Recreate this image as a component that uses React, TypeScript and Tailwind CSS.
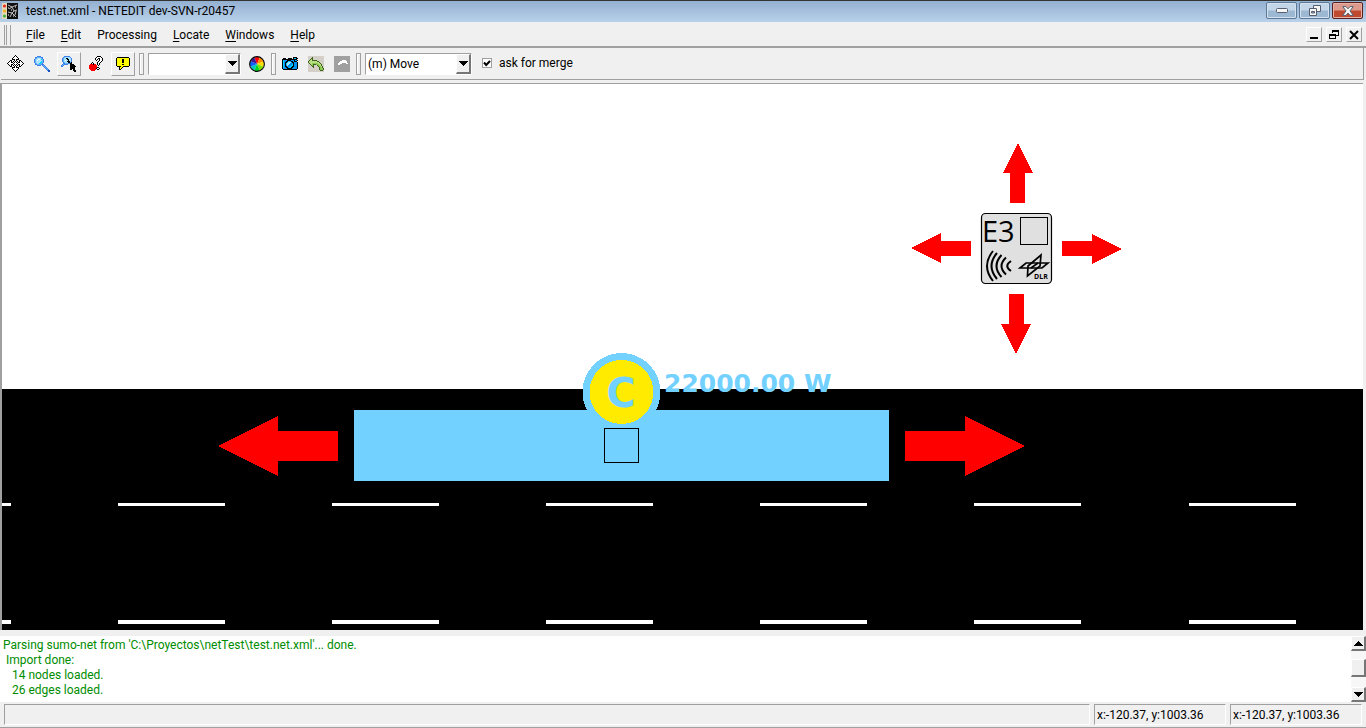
import React, { useState } from "react";

const TOOL_BUTTON = "flex h-6 w-6 shrink-0 items-center justify-center";
const RAISED =
  "border border-t-white border-l-white border-r-[#a0a0a0] border-b-[#a0a0a0]";
const SUNKEN =
  "border border-t-[#a0a0a0] border-l-[#a0a0a0] border-r-white border-b-white";
const RAISED_DEEP =
  "border-t border-l border-r-2 border-b-2 border-t-white border-l-white border-r-[#767676] border-b-[#767676] bg-[#f0f0f0]";

const PALETTE: Record<string, string> = {
  "#": "#000000",
  o: "#ffffff",
  b: "#3f7fe8",
  d: "#1c4fc4",
  l: "#a8e4ff",
  c: "#62b4f4",
  r: "#ff0000",
  y: "#ffff00",
  g: "#8cc850",
  h: "#b8e080",
  k: "#3c6420",
  t: "#d4d0c8",
  m: "#0090f0",
  s: "#00d0ff",
  x: "#a0a0a0",
};

function PixelIcon({ rows }: { rows: string[] }) {
  return (
    <svg
      width={rows[0].length}
      height={rows.length}
      viewBox={`0 0 ${rows[0].length} ${rows.length}`}
      shapeRendering="crispEdges"
      aria-hidden="true"
    >
      {rows.flatMap((row, y) =>
        row.split("").map((p, x) =>
          p === "." ? null : (
            <rect key={`${x}-${y}`} x={x} y={y} width="1" height="1" fill={PALETTE[p]} />
          ),
        ),
      )}
    </svg>
  );
}

const MOVE = [
  "........#........",
  ".......#o#.......",
  "......#ooo#......",
  ".....#ooooo#.....",
  ".....###o###.....",
  "...##..#o#..##...",
  "..#o#.#.#.#.#o#..",
  ".#oo##.#o#.##oo#.",
  "#ooooo#ooo#ooooo#",
  ".#oo##.#o#.##oo#.",
  "..#o#.#.#.#.#o#..",
  "...##..#o#..##...",
  ".....###o###.....",
  ".....#ooooo#.....",
  "......#ooo#......",
  ".......#o#.......",
  "........#........",
];

const MAGNIFIER = [
  "...bbbb.........",
  ".bbccccbb.......",
  ".bcllllcb.......",
  "bclloolscb......",
  "bclollllcb......",
  "bclllllscb......",
  "bcllllsscb......",
  ".bcllsscb.......",
  ".bbccccbbb......",
  "...bbbb.bcb.....",
  ".........bcb....",
  "..........bcb...",
  "...........bcb..",
  "............bcb.",
  ".............bdd",
  "..............dd",
];

const MAGNIFIER_CURSOR = [
  "...bbbbbb.......",
  "..bclllllb......",
  ".bcll##lllb.....",
  ".bclll##llb.....",
  ".bcloll#llb.....",
  ".bclll###lb.....",
  "..bclll##b#.....",
  "..bbcccbb##.....",
  ".bcbbbb..####...",
  "bcb......#####..",
  "bb.......######.",
  ".........#####..",
  ".........#####..",
  ".........##.##..",
  "............###.",
  ".............##.",
];

const HELP = [
  "........####..",
  ".......#oooo#.",
  "......#oo##oo#",
  "......#o#.#oo#",
  ".......#..#oo#",
  ".........#oo#.",
  "...#....#oo#..",
  "..#.#...#o#...",
  ".rrr#rr.#o#...",
  "rrrrrrrr.#....",
  "rrrrrrrr......",
  "rrrrrrrr##....",
  "rrrrrrr#oo#...",
  ".rrrrrr.##....",
  "..rrrr........",
];

const BUBBLE = [
  ".############.",
  "#yyyyyyyyyyyy#",
  "#yyyyy##yyyyy#",
  "#yyyyy##yyyyy#",
  "#yyyyy##yyyyy#",
  "#yyyyy##yyyyy#",
  "#yyyyyyyyyyyy#",
  "#yyyyy##yyyyy#",
  "#yyyyyyyyyyyy#",
  ".####yy######.",
  "...#yy#.......",
  "...#y#........",
  "...##.........",
];

const CAMERA = [
  "...........####.",
  ".###..####.#ss##",
  "###############.",
  "#smmm####mmm#mm#",
  "#smm##ssm##m###.",
  "#sm##slllm##mmm#",
  "#sm#slllmmm#mmm#",
  "#sm#sllmmms#mmm#",
  "#sm#mlmmmss#mmm#",
  "#sm##mmmss##mmm#",
  "#smm##mss##mmmm#",
  "#mmmm#####mmmmm#",
  ".##############.",
];

const UNDO = [
  "tttttttttttttttt",
  "ttttkttttttttttt",
  "tttkkttttttttttt",
  "ttkhkttttttttttt",
  "tkhhkkkkkttttttt",
  "khhhhhhhhkkttttt",
  "khhhhhhhhhhktttt",
  "tkhhgggggghhkttt",
  "ttkhgkkkggghhktt",
  "tttkgktttkgghktt",
  "ttttkkttttkgghkt",
  "tttttktttttkggkt",
  "tttttttttttkgggk",
  "tttttttttttkgggk",
  "ttttttttttttkkkt",
  "tttttttttttttttt",
];

const REDO = [
  "xxxxxxxxxxxxxxxx",
  "xxxxxxxxxxxxxxxx",
  "xxxxxxxxxxxxxxxx",
  "xxxxxxxxxxxxxxxx",
  "xxxxxxxxooooxxxx",
  "xxxxxxoooooooxxx",
  "xxxxxooooooooxxx",
  "xxxxooooxxxxooxx",
  "xxxxooxxxxxxxxxx",
  "xxxxxxxxxxxxxxxx",
  "xxxxxxxxxxxxxxxx",
  "xxxxxxxxxxxxxxxx",
  "xxxxxxxxxxxxxxxx",
  "xxxxxxxxxxxxxxxx",
  "xxxxxxxxxxxxxxxx",
  "xxxxxxxxxxxxxxxx",
];

function ColorWheel() {
  const colors = ["#ff0000", "#ff9000", "#ffe000", "#80e000", "#00d820", "#00c8c0", "#1060ff", "#401890"];
  const point = (i: number) => {
    const a = ((i * 45 - 112) * Math.PI) / 180;
    return `${8 + 7 * Math.cos(a)} ${8 + 7 * Math.sin(a)}`;
  };
  return (
    <svg width="16" height="16" viewBox="0 0 16 16" aria-hidden="true">
      {colors.map((c, i) => (
        <path key={c} d={`M8 8L${point(i)}A7 7 0 0 1 ${point(i + 1)}Z`} fill={c} />
      ))}
      <circle cx="8" cy="8" r="7.4" fill="none" stroke="#000" strokeWidth="1.1" />
    </svg>
  );
}

function AppIcon() {
  return (
    <svg width="16" height="16" viewBox="0 0 16 16" aria-hidden="true">
      <rect width="16" height="16" fill="#111" />
      <rect width="5" height="16" fill="#e6d9b8" />
      <circle cx="2.5" cy="3" r="1.6" fill="#e83020" />
      <circle cx="2.5" cy="8" r="1.6" fill="#f0b020" />
      <circle cx="2.5" cy="13" r="1.6" fill="#40b040" />
      <path
        d="M6 2l4 2 5-2M7 6l3-2 2 4 3-1M6 9l4 1 2-2M10 10l-2 4M10 10l4 4M14 8l-1 4"
        fill="none"
        stroke="#d0d0d0"
        strokeWidth=".9"
      />
      <path d="M6 5h1M9 7h1M13 4h1M6 12h1M11 13h1" stroke="#fff" />
    </svg>
  );
}

function Grip() {
  return (
    <span className="h-[22px] w-[5px] shrink-0 border border-[#a0a0a0] bg-[#f0f0f0] shadow-[inset_1px_1px_0_#fff]" />
  );
}

function Arrow({ up = false }: { up?: boolean }) {
  return (
    <svg width="9" height="5" viewBox="0 0 9 5" shapeRendering="crispEdges" aria-hidden="true">
      <path d={up ? "M0 5L4.5 0L9 5Z" : "M0 0H9L4.5 5Z"} />
    </svg>
  );
}

function Combo({ label, options, className }: { label: string; options: string[]; className: string }) {
  return (
    <span className={`relative h-[22px] shrink-0 bg-white ${SUNKEN} ${className}`}>
      <select aria-label={label} className="block h-full w-full appearance-none bg-transparent pl-[2px] outline-none">
        {options.map((o) => (
          <option key={o}>{o}</option>
        ))}
      </select>
      <span className={`pointer-events-none absolute inset-y-0 right-0 flex w-[15px] items-center justify-center ${RAISED_DEEP}`}>
        <Arrow />
      </span>
    </span>
  );
}

function ToolButton({ label, raised, children }: { label: string; raised?: boolean; children: React.ReactNode }) {
  return (
    <button type="button" aria-label={label} className={`${TOOL_BUTTON} ${raised ? RAISED : ""}`}>
      {children}
    </button>
  );
}

function TitleBar() {
  const glass =
    "flex h-[17px] w-[31px] items-center justify-center rounded-[2px] border border-[#5b7896] bg-linear-to-b from-[#c3d5e8] from-45% to-[#9db8d3] to-55% shadow-[inset_0_0_0_1px_#d4e2f0]";
  return (
    <header className="flex h-[22px] items-center border-t border-[#333] bg-linear-to-b from-[#94b0d1] to-[#b9d1ea] pr-[3px] pb-px pl-[2px]">
      <AppIcon />
      <h1 className="ml-2 flex-1">test.net.xml - NETEDIT dev-SVN-r20457</h1>
      <div className="flex gap-[2px] self-start pt-px">
        <button type="button" aria-label="Minimize" className={glass}>
          <svg width="12" height="5" viewBox="0 0 12 5">
            <rect x=".5" y=".5" width="11" height="4" rx="1" fill="#f5f5f5" stroke="#555f70" />
          </svg>
        </button>
        <button type="button" aria-label="Restore" className={glass}>
          <svg width="12" height="11" viewBox="0 0 12 11" fill="#f5f5f5" stroke="#555f70">
            <path d="M4.5 .5h7v6h-7z" />
            <path d="M.5 3.5h7v7h-7z" />
            <path d="M2.5 6.5h3v1.5h-3z" fill="#9db8d3" />
          </svg>
        </button>
        <button
          type="button"
          aria-label="Close"
          className="flex h-[17px] w-[31px] items-center justify-center rounded-[2px] border border-[#5a2020] bg-linear-to-b from-[#dd9a8c] from-45% to-[#c04a30] to-55% shadow-[inset_0_0_0_1px_#e6b0a4]"
        >
          <svg width="12" height="10" viewBox="0 0 12 10">
            <path
              d="M.8 .6H4L6 2.8 8 .6h3.2L8 4.9l3.3 4.5H8L6 7 4 9.4H.7L4 4.9Z"
              fill="#f5f5f5"
              stroke="#555f70"
            />
          </svg>
        </button>
      </div>
    </header>
  );
}

const MENUS = [
  ["F", "ile"],
  ["E", "dit"],
  ["", "Processing"],
  ["L", "ocate"],
  ["W", "indows"],
  ["H", "elp"],
];

function MenuBar() {
  const mdi = `flex h-[15px] w-4 items-center justify-center ${RAISED}`;
  return (
    <div className="flex h-[26px] items-center border-b-2 border-[#a0a0a0] pt-px pr-[4px] pl-[4px]">
      <span className="h-5 w-[3px] border-x border-[#a0a0a0]" />
      <span className="ml-px h-5 w-[3px] border-r border-[#a0a0a0]" />
      <nav className="ml-[7px] flex flex-1">
        {MENUS.map(([key, rest]) => (
          <button key={rest} type="button" className="px-2">
            <span className="underline underline-offset-2">{key}</span>
            {rest}
          </button>
        ))}
      </nav>
      <div className="flex gap-1">
        <button type="button" aria-label="Minimize document" className={mdi}>
          <svg width="10" height="10" viewBox="0 0 10 10" shapeRendering="crispEdges">
            <path d="M1 7h8v2H1z" />
          </svg>
        </button>
        <button type="button" aria-label="Restore document" className={mdi}>
          <svg width="10" height="10" viewBox="0 0 10 10" shapeRendering="crispEdges" fill="none" stroke="#000">
            <path d="M3.5 3V.5h6v5H7M3 1.5h7M.5 4.5h6v4h-6zM0 5.5h7" />
          </svg>
        </button>
        <button type="button" aria-label="Close document" className={mdi}>
          <svg width="10" height="10" viewBox="0 0 10 10">
            <path d="M1 1l8 8M9 1l-8 8" stroke="#000" strokeWidth="2" />
          </svg>
        </button>
      </div>
    </div>
  );
}

function ToolBar() {
  const [merge, setMerge] = useState(true);
  return (
    <div className="mr-[2px] ml-px flex h-8 items-center border-r border-b border-[#a0a0a0] pl-[2px]">
      <div className="flex gap-[3px]">
        <ToolButton label="Recenter view"><PixelIcon rows={MOVE} /></ToolButton>
        <ToolButton label="Zoom"><PixelIcon rows={MAGNIFIER} /></ToolButton>
        <ToolButton label="Zoom to cursor" raised><PixelIcon rows={MAGNIFIER_CURSOR} /></ToolButton>
        <ToolButton label="Help"><PixelIcon rows={HELP} /></ToolButton>
        <ToolButton label="Show tooltips" raised><PixelIcon rows={BUBBLE} /></ToolButton>
      </div>
      <div className="ml-1 flex items-center gap-1">
        <Grip />
        <Combo label="View scheme" options={[""]} className="w-[93px]" />
        <ToolButton label="Edit colors"><ColorWheel /></ToolButton>
      </div>
      <div className="ml-[2px] flex items-center gap-[2px]">
        <Grip />
        <ToolButton label="Take snapshot"><PixelIcon rows={CAMERA} /></ToolButton>
        <ToolButton label="Undo"><PixelIcon rows={UNDO} /></ToolButton>
        <ToolButton label="Redo"><PixelIcon rows={REDO} /></ToolButton>
      </div>
      <div className="ml-[2px] flex items-center gap-1">
        <Grip />
        <Combo label="Edit mode" options={["(m) Move"]} className="w-[107px]" />
      </div>
      <label className="ml-[10px] flex items-center gap-[7px] pb-[2px]">
        <span className="relative flex">
          <input
            type="checkbox"
            checked={merge}
            onChange={(e) => setMerge(e.target.checked)}
            className="h-[10px] w-[10px] appearance-none border border-[#a0a0a0] bg-white"
          />
          {merge && (
            <svg className="pointer-events-none absolute inset-0" width="10" height="10" viewBox="0 0 10 10" aria-hidden="true">
              <path d="M2 4.5L4.2 7L8 3" fill="none" stroke="#000" strokeWidth="2" />
            </svg>
          )}
        </span>
        ask for merge
      </label>
    </div>
  );
}

const LANE_MARKS = [-98, 116, 330, 544, 758, 972, 1187];

function NetworkView() {
  return (
    <main className="mr-[3px] flex min-h-80 flex-1 border-t border-l-2 border-[#a0a0a0] bg-white">
      <svg className="h-auto w-full" viewBox="0 0 1361 546" preserveAspectRatio="xMidYMax slice" role="img" aria-label="Road network">
        <g shapeRendering="crispEdges">
          <rect y="305" width="1361" height="241" />
          <g fill="#fff">
            {LANE_MARKS.map((x) => (
              <g key={x}>
                <rect x={x} y="419" width="107" height="3" />
                <rect x={x} y="536" width="107" height="4" />
              </g>
            ))}
          </g>
          <rect x="352" y="326" width="535" height="71" fill="#73d1ff" />
          <g fill="#f00">
            <path d="M216 362L276 332V347H336V377H276V392Z" />
            <path d="M1023 362L963 332V347H903V377H963V392Z" />
            <path d="M1016 59L1031 89H1023V119H1008V89H1001Z" />
            <path d="M909 164L939 149V157H969V172H939V179Z" />
            <path d="M1120 165L1090 150V157H1060V172H1090V180Z" />
            <path d="M1014 270L1029 240H1022V210H1007V240H999Z" />
          </g>
          <circle cx="619.5" cy="308" r="39" fill="#73d1ff" />
          <circle cx="619.5" cy="308" r="32" fill="#ffeb00" />
          <rect x="602.5" y="344.5" width="34" height="34" fill="none" stroke="#000" />
        </g>
        <g fill="#73d1ff" fontFamily="DejaVu Sans, sans-serif" fontWeight="700">
          <text x="619" y="323" fontSize="40" textAnchor="middle">C</text>
          <text x="662" y="308" fontSize="25">22000.00 W</text>
        </g>
        <rect x="979.5" y="129.5" width="70" height="70" rx="4" fill="#e0e0e0" stroke="#000" strokeWidth="1.2" />
        <rect x="1018.5" y="133.5" width="27" height="27" fill="none" stroke="#000" shapeRendering="crispEdges" />
        <text x="980" y="158" fontSize="29" fontFamily="Open Sans, sans-serif">E3</text>
        <g fill="none" stroke="#000" strokeWidth="2">
          <path d="M991 167Q979 182 991 197" />
          <path d="M995 169Q984 182 995 195" />
          <path d="M999.5 171Q989.5 182 999.5 193" />
          <path d="M1004 173.5Q995 182 1004 190.500" />
          <path d="M1009 177Q1001.5 182 1009 187" />
        </g>
        <g fill="none" stroke="#000" strokeWidth="1.7">
          <path d="M1018 184L1024 179H1046L1040 184Z" />
          <path d="M1039 171L1038 182L1025.5 192L1026 182Z" />
          <path d="M1029 184L1036 179" />
        </g>
        <text x="1032" y="195" fontSize="7" fontWeight="700" fontFamily="Open Sans, sans-serif">DLR</text>
      </svg>
    </main>
  );
}

function MessageLog() {
  return (
    <section className="mt-[6px] flex h-[66px] bg-white">
      <pre role="log" className="flex-1 overflow-hidden pt-[2px] pl-[3px] font-[Roboto,sans-serif] leading-[15px] text-[#008c00]">
        {"Parsing sumo-net from 'C:\\Proyectos\\netTest\\test.net.xml'... done.\n Import done:\n   14 nodes loaded.\n   26 edges loaded."}
      </pre>
      <div className="flex w-[15px] flex-col bg-[#f7f7f7]">
        <button type="button" aria-label="Scroll up" className={`flex h-[15px] items-center justify-center ${RAISED_DEEP}`}>
          <Arrow up />
        </button>
        <div className="flex flex-1 flex-col pt-2">
          <span className={`h-[18px] ${RAISED_DEEP}`} />
        </div>
        <button type="button" aria-label="Scroll down" className={`flex h-[15px] items-center justify-center ${RAISED_DEEP}`}>
          <Arrow />
        </button>
      </div>
    </section>
  );
}

function StatusBar() {
  return (
    <footer className="flex h-[26px] gap-1 border-b border-[#a0a0a0] px-1 pt-[2px] pb-[2px]">
      <span className={`flex-1 ${SUNKEN}`} />
      <span className={`flex w-[132px] items-center pl-[2px] ${SUNKEN}`}>x:-120.37, y:1003.36</span>
      <span className={`flex w-[132px] items-center pl-[2px] ${SUNKEN}`}>x:-120.37, y:1003.36</span>
    </footer>
  );
}

export default function App() {
  return (
    <div className="flex min-h-screen flex-col bg-[#f0f0f0] font-[Roboto,sans-serif] text-[12px] leading-4 text-black">
      <TitleBar />
      <MenuBar />
      <ToolBar />
      <div className="mt-[3px] flex flex-1 flex-col">
        <NetworkView />
        <MessageLog />
      </div>
      <StatusBar />
    </div>
  );
}
